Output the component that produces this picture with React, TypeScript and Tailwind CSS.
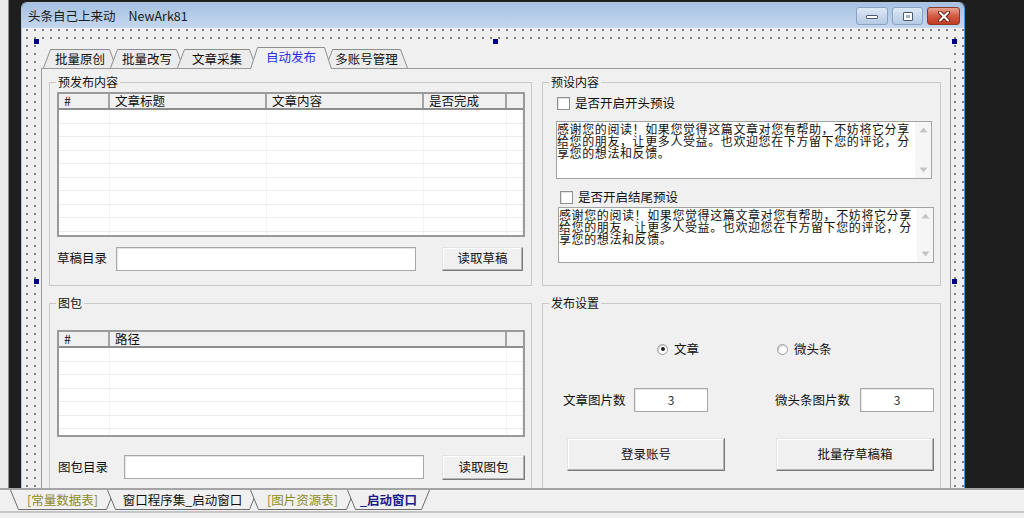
import React from 'react';

const memoLines = [
  '感谢您的阅读！如果您觉得这篇文章对您有帮助，不妨将它分享',
  '给您的朋友，让更多人受益。也欢迎您在下方留下您的评论，分',
  '享您的想法和反馈。',
];

const topTabs = [
  { label: '批量原创', w: 'w-[74px]', z: 'z-[1]', active: false },
  { label: '批量改写', w: 'w-[74px]', z: 'z-[2]', active: false },
  { label: '文章采集', w: 'w-[80px]', z: 'z-[3]', active: false },
  { label: '自动发布', w: 'w-[82px]', z: 'z-[6]', active: true },
  { label: '多账号管理', w: 'w-[83px]', z: 'z-[1]', active: false },
];
const topTabWidths = [74, 74, 80, 82, 83];

const ideTabs = [
  { label: '[常量数据表]', w: 'w-[105px]', px: 105, z: 'z-[1]', text: 'text-[#8c8c1e]' },
  { label: '窗口程序集_启动窗口', w: 'w-[151px]', px: 151, z: 'z-[2]', text: 'text-[#111]' },
  { label: '[图片资源表]', w: 'w-[105px]', px: 105, z: 'z-[3]', text: 'text-[#8c8c1e]' },
  { label: '_启动窗口', w: 'w-[83px]', px: 83, z: 'z-[4]', text: 'font-bold text-[#1c1c8e]' },
];

function Checkbox() {
  return <span className="block h-[13px] w-[13px] shrink-0 border border-[#8e8f8f] bg-white shadow-[inset_1px_1px_0_#e2e2e2]" />;
}

function Radio({ checked }: { checked?: boolean }) {
  return (
    <span className="flex h-[11px] w-[11px] shrink-0 items-center justify-center rounded-full border border-[#9c9c9c] bg-white shadow-[inset_1px_1px_1px_#cfcfcf]">
      {checked && <span className="h-[4px] w-[4px] rounded-full bg-[#1e1e1e]" />}
    </span>
  );
}

function Field({ className = '', value = '' }: { className?: string; value?: string }) {
  return (
    <div className={`h-[24px] shrink-0 border border-[#a8a8a8] bg-white text-center text-[12px] leading-[22px] text-[#333] shadow-[inset_1px_1px_0_#e6e6e6] ${className}`}>
      {value}
    </div>
  );
}

function Btn({ className = '', children }: { className?: string; children: React.ReactNode }) {
  return (
    <button className={`flex shrink-0 items-center justify-center border border-[#e3e3e3] border-r-[#7a7a7a] border-b-[#7a7a7a] bg-[#f0f0f0] text-[12.5px] text-[#111] shadow-[inset_-1px_-1px_0_#b4b4b4,inset_1px_1px_0_#ffffff] ${className}`}>
      {children}
    </button>
  );
}

function Group({ title, className = '', children }: { title: string; className?: string; children: React.ReactNode }) {
  return (
    <fieldset className={`box-border shrink-0 border border-[#c9c9c9] ${className}`}>
      <legend className="ml-[6px] px-[2px] text-[12px] leading-[16px] text-[#111]">{title}</legend>
      {children}
    </fieldset>
  );
}

function Memo({ className = '' }: { className?: string }) {
  return (
    <div className={`flex shrink-0 border border-[#a3a3a3] bg-white ${className}`}>
      <div className="flex-1 pt-[1px] text-[12px] leading-[12px] tracking-[0.6px] text-[#111]">
        {memoLines.map((l) => (
          <div key={l} className="whitespace-nowrap">{l}</div>
        ))}
      </div>
      <div className="flex w-[16px] flex-col items-center justify-between bg-[#f6f6f6] py-[5px]">
        <svg width="9" height="6" viewBox="0 0 9 6"><path d="M4.5 0.5 L8.5 5.5 L0.5 5.5 Z" fill="#c4c4c4" /></svg>
        <svg width="9" height="6" viewBox="0 0 9 6"><path d="M0.5 0.5 L8.5 0.5 L4.5 5.5 Z" fill="#c4c4c4" /></svg>
      </div>
    </div>
  );
}

function Table({ cols, heads, rows, className = '' }: { cols: string; heads: string[]; rows: number; className?: string }) {
  return (
    <div className={`flex shrink-0 flex-col overflow-hidden border-2 border-[#9a9a9a] bg-white ${className}`}>
      <div className={`grid h-[16px] shrink-0 border-b-2 border-[#8e8e8e] bg-[#f0f0f0] ${cols}`}>
        {heads.map((h, i) => (
          <div
            key={i}
            className={`pl-[5px] text-[12.5px] leading-[14px] text-[#111] ${i < heads.length - 1 ? 'border-r-2 border-[#a4a4a4]' : ''}`}
          >
            {h}
          </div>
        ))}
      </div>
      {Array.from({ length: rows }).map((_, r) => (
        <div key={r} className={`grid h-[13.5px] shrink-0 border-b border-[#ececec] ${cols}`}>
          {heads.map((_, i) => (
            <div key={i} className="border-r border-[#f3f3f3]" />
          ))}
        </div>
      ))}
    </div>
  );
}

function TopTab({ label, w, z, active, px, first }: { label: string; w: string; z: string; active: boolean; px: number; first: boolean }) {
  const h = active ? 22 : 19;
  return (
    <div
      className={`relative flex shrink-0 items-center justify-center ${w} ${z} ${first ? '' : '-ml-[7px]'} ${
        active ? '-mb-px h-[22px] pb-[2px] text-[#2b2be0]' : 'h-[19px] text-[#111]'
      }`}
    >
      <svg className="absolute inset-0" width={px} height={h} viewBox={`0 0 ${px} ${h}`}>
        <path
          d={`M0.5 ${h} L7.5 0.5 L${px - 7.5} 0.5 L${px - 0.5} ${h}`}
          fill={active ? '#f0f0f0' : '#ececec'}
          stroke="#8e8e8e"
        />
      </svg>
      <span className="relative text-[12.5px] leading-[16px]">{label}</span>
    </div>
  );
}

function IdeTab({ label, w, px, z, text, first }: { label: string; w: string; px: number; z: string; text: string; first: boolean }) {
  return (
    <div className={`relative flex h-[20px] shrink-0 items-center justify-center ${w} ${z} ${first ? '' : '-ml-[8px]'}`}>
      <svg className="absolute inset-0" width={px} height={20} viewBox={`0 0 ${px} 20`}>
        <path d={`M0.5 0 L8.5 19.5 L${px - 8.5} 19.5 L${px - 0.5} 0`} fill="#f0f0f0" stroke="#6c6c6c" />
      </svg>
      <span className={`relative text-[12.5px] leading-[16px] ${text}`}>{label}</span>
    </div>
  );
}

function Handle({ className }: { className: string }) {
  return <span className={`absolute z-10 h-[5px] w-[5px] bg-[#000080] ${className}`} />;
}

export default function App() {
  return (
    <div className="flex h-[518px] w-[1024px] flex-col overflow-hidden bg-[#1e1e1e] font-['Noto_Sans_CJK_SC','Noto_Sans',sans-serif] text-[#111]">
      <div className="flex h-[488px] shrink-0">
        <div className="w-[9px] shrink-0 border-r border-[#8c8c8c] bg-[#ebebeb]" />
        <div className="w-[12px] shrink-0" />

        {/* window */}
        <div className="mt-[2px] flex h-[486px] w-[944px] shrink-0 flex-col overflow-hidden rounded-t-[6px] border border-b-0 border-[#b3c6dc] border-r-[#3f9bd8]">
          <div className="flex h-[25px] shrink-0 items-start justify-between bg-gradient-to-b from-[#a6c1e2] to-[#c5d8ee] pl-[6px] pr-[4px]">
            <div className="pt-[5px] text-[12.5px] leading-[16px] text-[#1a1a1a]">
              头条自己上来动<span className="ml-[13px]">NewArk81</span>
            </div>
            <div className="flex gap-[4px] pt-[4px]">
              <div className="flex h-[18px] w-[32px] items-center justify-center rounded-[3px] border border-[#8aa3c2] bg-gradient-to-b from-[#dde8f5] to-[#b5cae4]">
                <span className="mt-[2px] h-[4px] w-[12px] rounded-[1px] border border-[#4e5a68] bg-white" />
              </div>
              <div className="flex h-[18px] w-[31px] items-center justify-center rounded-[3px] border border-[#8aa3c2] bg-gradient-to-b from-[#dde8f5] to-[#b5cae4]">
                <span className="h-[9px] w-[10px] rounded-[1px] border border-[#4e5a68] bg-[#9fb3cb] shadow-[inset_0_0_0_2px_#ffffff]" />
              </div>
              <div className="flex h-[18px] w-[33px] items-center justify-center rounded-[3px] border border-[#8c3a2c] bg-gradient-to-b from-[#e6a190] via-[#d35a43] to-[#c13b22]">
                <svg width="12" height="11" viewBox="0 0 12 11">
                  <path d="M2 1.5 L10 9.5 M10 1.5 L2 9.5" stroke="#6b2418" strokeWidth="4" strokeLinecap="round" />
                  <path d="M2 1.5 L10 9.5 M10 1.5 L2 9.5" stroke="#ffffff" strokeWidth="2" strokeLinecap="round" />
                </svg>
              </div>
            </div>
          </div>

          {/* client area in design mode */}
          <div className="relative flex flex-1 flex-col bg-[#f0f0f0] bg-[radial-gradient(circle,#7c7c7c_0.7px,transparent_1.1px)] pl-[17px] pt-[16px] [background-size:8px_8px] [background-position:1px_-2px]">
            <Handle className="left-[12px] top-[11px]" />
            <Handle className="left-[471px] top-[11px]" />
            <Handle className="left-[930px] top-[11px]" />
            <Handle className="left-[12px] top-[251px]" />
            <Handle className="left-[930px] top-[251px]" />

            {/* tab control */}
            <div className="flex w-[914px] flex-1 flex-col bg-[#f0f0f0] pl-[2px] pr-[2px]">
              <div className="flex h-[24px] shrink-0 items-end pl-[2px]">
                {topTabs.map((t, i) => (
                  <TopTab key={t.label} {...t} px={topTabWidths[i]} first={i === 0} />
                ))}
              </div>

              <div className="flex-1 border border-b-0 border-[#9a9a9a] bg-[#f0f0f0] pl-[7px] pt-[5px]">
                <div className="flex gap-[10px]">
                  <Group title="预发布内容" className="h-[212px] w-[483px]">
                    <div className="pl-[7px] pt-[2px]">
                      <Table
                        className="h-[145px] w-[468px]"
                        cols="grid-cols-[51px_157px_157px_83px_1fr]"
                        heads={['#', '文章标题', '文章内容', '是否完成', '']}
                        rows={10}
                      />
                      <div className="mt-[9px] flex h-[25px] items-center">
                        <span className="w-[59px] shrink-0 text-[12.5px]">草稿目录</span>
                        <Field className="w-[300px]" />
                        <Btn className="ml-[26px] h-[24px] w-[81px]">读取草稿</Btn>
                      </div>
                    </div>
                  </Group>

                  <Group title="预设内容" className="h-[212px] w-[399px]">
                    <div className="pl-[14px] pt-[7px]">
                      <label className="flex h-[13px] items-center gap-[5px] text-[12.5px]">
                        <Checkbox />
                        是否开启开头预设
                      </label>
                      <Memo className="-ml-[1px] mt-[11px] h-[58px] w-[376px]" />
                      <label className="ml-[3px] mt-[12px] flex h-[13px] items-center gap-[5px] text-[12.5px]">
                        <Checkbox />
                        是否开启结尾预设
                      </label>
                      <Memo className="ml-[1px] mt-[3px] h-[56px] w-[376px]" />
                    </div>
                  </Group>
                </div>

                <div className="mt-[9px] flex gap-[10px]">
                  <Group title="图包" className="h-[220px] w-[483px]">
                    <div className="pl-[7px] pt-[19px]">
                      <Table
                        className="h-[107px] w-[468px]"
                        cols="grid-cols-[51px_397px_1fr]"
                        heads={['#', '路径', '']}
                        rows={7}
                      />
                      <div className="mt-[17px] flex h-[26px] items-center">
                        <span className="ml-[1px] w-[66px] shrink-0 text-[12.5px]">图包目录</span>
                        <Field className="w-[300px]" />
                        <Btn className="ml-[18px] h-[25px] w-[83px]">读取图包</Btn>
                      </div>
                    </div>
                  </Group>

                  <Group title="发布设置" className="h-[220px] w-[399px]">
                    <div className="pt-[31px]">
                      <div className="ml-[114px] flex h-[14px] items-center text-[12.5px]">
                        <label className="flex w-[120px] items-center gap-[6px]">
                          <Radio checked />
                          文章
                        </label>
                        <label className="flex items-center gap-[6px]">
                          <Radio />
                          微头条
                        </label>
                      </div>
                      <div className="ml-[20px] mt-[32px] flex h-[24px] items-center text-[12.5px]">
                        <span className="w-[71px] shrink-0">文章图片数</span>
                        <Field className="w-[74px]" value="3" />
                        <span className="ml-[67px] w-[85px] shrink-0">微头条图片数</span>
                        <Field className="w-[74px]" value="3" />
                      </div>
                      <div className="ml-[24px] mt-[26px] flex h-[33px] items-center">
                        <Btn className="h-[33px] w-[158px]">登录账号</Btn>
                        <Btn className="ml-[51px] h-[33px] w-[158px]">批量存草稿箱</Btn>
                      </div>
                    </div>
                  </Group>
                </div>
              </div>
            </div>
          </div>
        </div>
        <div className="flex-1" />
      </div>

      {/* IDE tab strip */}
      <div className="flex h-[30px] shrink-0 flex-col border-t-2 border-[#a4a4a4] bg-[#f0f0f0]">
        <div className="flex h-[21px] shrink-0 items-start pl-[10px]">
          {ideTabs.map((t, i) => (
            <IdeTab key={t.label} {...t} first={i === 0} />
          ))}
        </div>
        <div className="border-t-2 border-[#c4c4c4]" />
      </div>
    </div>
  );
}
